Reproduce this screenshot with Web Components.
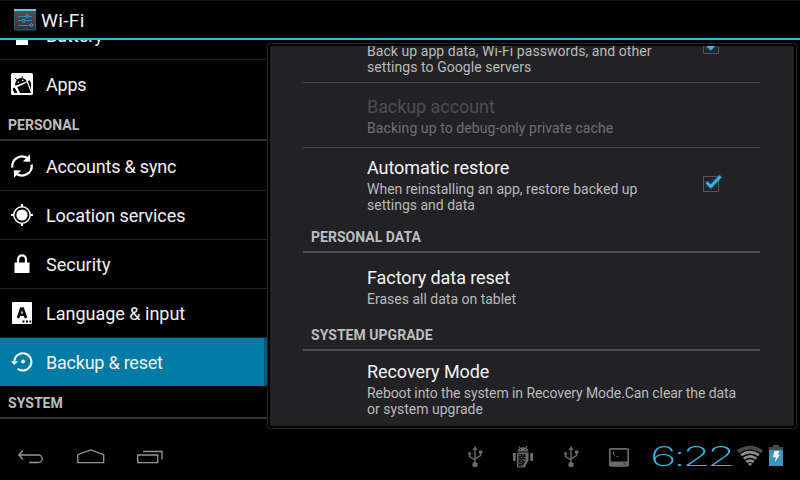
<!DOCTYPE html>
<html lang="en"><head><meta charset="utf-8"><title>Settings</title>
<style>html,body{margin:0;background:#000}</style></head><body><settings-screen></settings-screen>
<script>
const define=(name,html)=>customElements.define(name,class extends HTMLElement{
  constructor(){super();this.attachShadow({mode:'open'}).innerHTML=html}
});
const icons={
settings:['22','<defs><linearGradient id="g" x2="0" y2="1"><stop stop-color="#535355"/><stop offset="1" stop-color="#303235"/></linearGradient></defs><path fill="url(#g)" stroke="#286080" d="M.5.5h21v20.5H.5z"/><path fill="#58c9f5" d="M0 0h22v2H0z"/><path stroke="#2588ba" d="M4 7.5h14M4 11.500h14M4 16.5h14"/><g fill="#263b49" stroke="#45a9da"><circle cx="13.500" cy="7" r="1.400"/><circle cx="9.700" cy="11.700" r="1.400"/><circle cx="17.500" cy="16" r="1.400"/></g>'],
battery:['22','<path fill="#fff" d="M7 0h8v3h2v18H5V3h2z"/>'],
apps:['22','<rect width="22" height="22" rx="1.5" fill="#fff"/><g fill="#000"><path d="M4.2 12.7C3.7 8 7 5 10.5 5c2.500 0 4.500 1.500 5.300 3.500zM6.300 14.300 16 9.600l4 10.400H9zM2 15.200l1.700-.7 2.800 5.500H3.500L2 17zM16.800 8l1.700-.8L20 10v6.500z"/><path stroke="#000" d="m6.800 7.500-3-2.700M11.300 6l-.2-3"/></g><g fill="#fff"><circle cx="7.500" cy="9.200" r=".8"/><circle cx="11.700" cy="7.400" r=".8"/></g>'],
sync:['22','<g fill="none" stroke="#fff" stroke-width="2.300"><path d="M1.300 12.500C.3 4 9.500-1.500 16.800 3.200M20.700 9.500C21.700 18 12.500 23.500 5.200 18.800"/></g><path fill="#fff" d="m19-.7.2 7.500-7.400-.4zM3 22.700l-.2-7.500 7.400.4z"/>'],
location:['22','<circle cx="11" cy="11" r="5.600" fill="#fff"/><circle cx="11" cy="11" r="8.200" fill="none" stroke="#fff" stroke-width="1.500"/><path stroke="#fff" stroke-width="2.200" d="M11 0v3M11 19v3M0 11h3M19 11h3"/>'],
security:['22','<path fill="#fff" d="M3.500 9.500h15V20h-15z"/><path fill="none" stroke="#fff" stroke-width="2.200" d="M7 10V6.800c0-6 8-6 8 0V10"/>'],
language:['22','<rect x="1" width="20" height="22" rx="1" fill="#fff"/><path fill="none" stroke="#000" stroke-width="2.600" d="m7 16 3.200-9.500h1.600L15 16M8 12.700h6"/><path fill="#000" d="M11.500 18.500h2v2h-2zM15 18.500h2v2h-2zM18.500 18.500h1.700v2h-1.700z"/>'],
backup:['22','<path fill="none" stroke="#fff" stroke-width="2" d="M3.200 10.500a8.600 8.600 0 1 1 3.500 7.300"/><path fill="#fff" d="M0 10.300h7L3.400 14z"/><circle cx="12" cy="10.500" r="1.900" fill="#fff"/>'],
back:['26 16','<path fill="none" stroke="#969696" stroke-width="1.300" d="M1 6h19.500a3.500 3.500 0 0 1 0 7.500H11M5 1.500.8 6 5 10.500"/>'],
home:['28 16','<path fill="none" stroke="#969696" stroke-width="1.300" d="M.7 13.700V5.700L13.700 1l13 4.700v8z"/>'],
recent:['26 16','<path fill="none" stroke="#969696" stroke-width="1.300" d="M.7 6h20v7.700H.7zM6 2.500h19v8"/>'],
usb:['14 22','<g fill="none" stroke="#6b6b6b" stroke-width="1.400"><path d="M7 2v17M1.500 7v3.500L7 14M12.500 6v3.500L7 13"/></g><g fill="#6b6b6b"><circle cx="7" cy="18.600" r="2.700"/><path d="m7 0 2.500 4h-5zM11 4.500h3.500v3H11z"/><circle cx="1.600" cy="7.500" r="1.600"/></g>'],
android:['20 22','<g fill="#6b6b6b"><path d="M4.500 5.500C5 2.500 7 1.300 10 1.300s5 1.200 5.500 4.200zM0 7h2.700v8H0zM17.300 7H20v8h-2.700z"/><path d="M4 7.500q0-1 1-1h10.500v8L11.500 21.500H5q-1 0-1-1z"/><path stroke="#6b6b6b" d="M7 2 6 0M13 2l1-2"/></g><path fill="#161616" d="M7 3h1v1H7zM12 3h1v1h-1zM5.500 8h7v7l-3 5.500h-4z"/><path fill="#777" d="M6.500 9h1v1h-1zM9.500 9h1v1h-1zM8 11h1v1H8zM11 11h1v1h-1zM6.500 13h1v1h-1zM9.500 13h1v1h-1zM8 15h1v1H8zM11 14h1v1h-1zM6.500 17h1v1h-1zM8 19h1v1H8z"/>'],
terminal:['20 19','<rect x=".8" y=".8" width="18.400" height="17.200" rx="1.200" fill="#050505" stroke="#6b6b6b" stroke-width="1.700"/><path fill="#6b6b6b" d="M1 13.500h18V18H1z"/><path stroke="#707070" d="M4.500 4v2l1 1.500"/><path stroke="#444" d="M7 8.500h3"/><path stroke="#111" d="M14.500 16h2"/>'],
wifi:['26 20','<g fill="none" stroke="#8d8d8d" stroke-width="2.700"><path stroke="#494949" stroke-width="3.600" d="M1 5.800q12-8.500 24 0"/><path d="M4 9.200q9-6.200 18 0M6.700 12.700q6.300-4.500 12.600 0M9.200 15.900q3.800-2.700 7.600 0"/></g><path fill="#8d8d8d" d="M10.800 17.800q2.200-1.500 4.400 0L13 20z"/>'],
charge:['14 21','<path fill="#484848" d="M0 2h4V0h6v2h4v4H0z"/><path fill="#3c94bc" d="M0 5h14v16H0z"/><path fill="#eef5f8" d="M5.500 6h4.800L8.800 9.500H11L6 17l.8-4.800H3.800z"/>'],
check:['24 24','<defs><filter id="f" x="-50%" y="-50%" width="200%" height="200%"><feGaussianBlur stdDeviation="1.500"/></filter></defs><path fill="none" stroke="#56565a" d="M3.500 6.500h15v15h-15z"/><path filter="url(#f)" opacity=".5" fill="none" stroke="#149cd0" stroke-width="3.500" d="m6.500 12.500 4.300 4L20.500 6.500"/><path fill="none" stroke="#33b5e5" stroke-width="2.700" d="m6.500 12.300 4.300 4.200L20.600 6.300"/>']};
customElements.define('glyph-icon',class extends HTMLElement{
 connectedCallback(){const [s,p]=icons[this.getAttribute('name')];let [w,h]=s.split(' ');h=h||w;
 (this.shadowRoot||this.attachShadow({mode:'open'})).innerHTML=`<style>:host{display:block;flex:none}svg{display:block;overflow:visible}</style><svg width="${w}" height="${h}" viewBox="0 0 ${w} ${h}">${p}</svg>`}
});
define('nav-item',`<style>:host{display:flex;height:48px;border-bottom:1px solid #252525;align-items:center;padding-left:11px;gap:13px;color:#f3f3f3;font-size:18px;letter-spacing:var(--track,0)}
:host([selected]){background:linear-gradient(90deg,#007ba5 264px,#00587a 264px);border-bottom:0}:host([last]){border-bottom:0}span{white-space:nowrap}</style><slot name="icon"></slot><span><slot></slot></span>`);
define('section-title',`<style>:host{display:block;height:31px;border-bottom:2px solid #343434;font:bold 14px/34px Roboto,sans-serif;color:#bdbdbd;padding-left:8px;letter-spacing:.03px}
:host([panel]){border-color:#4b4b50}</style><slot></slot>`);
define('pref-row',`<style>:host{display:flex;box-sizing:border-box;border-bottom:1px solid #49494d;padding:2px 36px 0 64px;justify-content:space-between;align-items:center;color:#f3f3f3}
:host([last]){border:0}:host([disabled]){color:#4d4d4f;--summary:#707072}.t{font-size:18px;line-height:22px;white-space:nowrap;letter-spacing:-.07px}.s{padding-top:2px;font-size:14px;line-height:16px;color:var(--summary,#bababa);white-space:nowrap;letter-spacing:var(--strack,0)}</style><div><div class="t"><slot name="title"></slot></div><div class="s"><slot></slot></div></div><slot name="control"></slot>`);
define('title-bar',`<style>:host{box-sizing:border-box;display:flex;height:40px;border-bottom:2px solid #33b5e5;border-top:1px solid #111;background:#000;align-items:center;padding:1px 14px 0;gap:5px;color:#f3f3f3;font-size:19px;letter-spacing:.35px}span{padding-top:1px}</style><glyph-icon name="settings"></glyph-icon><span><slot></slot></span>`);
define('nav-list',`<style>:host{display:flex;flex-direction:column;justify-content:flex-start;width:267px;height:390px;overflow:hidden}div{margin-top:-29px}</style><div><slot></slot></div>`);
define('detail-pane',`<style>:host{display:block;box-sizing:border-box;width:530px;height:386px;margin-top:3px;border:1px solid #252525;padding:2px;background:#000}
div{height:380px;background:#222226;overflow:hidden}section{width:457px;margin:-30px 0 0 33px}</style><div><section><slot></slot></section></div>`);
define('status-bar',`<style>:host{display:flex;height:50px;background:#000;justify-content:space-between}nav,aside{display:flex;align-items:center}nav{padding:4px 0 0 18px;gap:33px}nav :last-child{margin-left:-1px}aside{padding:4px 17px 0 0}
.a{display:flex;align-items:center;gap:38px}.clock{width:83px;height:30px;margin-left:22px}.clock span{display:block;transform:scaleX(1.69);transform-origin:left;font:200 27px/30px Inter,sans-serif;letter-spacing:-2px;color:#33b5e5;width:max-content;margin-left:-1px}
.w{margin:-2px 0 0 3px}.b{margin:-3px 0 0 6px}</style>
<nav><glyph-icon name="back"></glyph-icon><glyph-icon name="home"></glyph-icon><glyph-icon name="recent"></glyph-icon></nav>
<aside><div class="a"><glyph-icon name="usb" style="margin-right:-7px"></glyph-icon><glyph-icon name="android"></glyph-icon><glyph-icon name="usb" style="margin:0 -7px"></glyph-icon><glyph-icon name="terminal"></glyph-icon></div><div class="clock"><span>6:22</span></div><glyph-icon class="w" name="wifi"></glyph-icon><glyph-icon class="b" name="charge"></glyph-icon></aside>`);
define('settings-screen',`<style>:host{display:block;width:800px;height:480px;overflow:hidden;background:#000;font-family:Roboto,sans-serif}main{display:flex;height:390px}</style>
<title-bar>Wi-Fi</title-bar><main><nav-list>
<nav-item><glyph-icon slot="icon" name="battery"></glyph-icon>Battery</nav-item>
<nav-item last style="--track:-.2px"><glyph-icon slot="icon" name="apps"></glyph-icon>Apps</nav-item>
<section-title style="margin-bottom:1px">PERSONAL</section-title>
<nav-item style="--track:-.2px"><glyph-icon slot="icon" name="sync"></glyph-icon>Accounts &amp; sync</nav-item>
<nav-item style="--track:-.07px"><glyph-icon slot="icon" name="location"></glyph-icon>Location services</nav-item>
<nav-item><glyph-icon slot="icon" name="security"></glyph-icon>Security</nav-item>
<nav-item><glyph-icon slot="icon" name="language"></glyph-icon>Language &amp; input</nav-item>
<nav-item selected style="--track:-.23px"><glyph-icon slot="icon" name="backup"></glyph-icon>Backup &amp; reset</nav-item>
<section-title>SYSTEM</section-title>
</nav-list><detail-pane>
<pref-row style="height:67px;padding-top:0;padding-bottom:4px;--strack:.06px"><span slot="title">Back up my data</span>Back up app data, Wi-Fi passwords, and other<br>settings to Google servers<glyph-icon slot="control" name="check" style="margin-top:-6px"></glyph-icon></pref-row>
<pref-row disabled style="height:65px;--strack:.08px"><span slot="title">Backup account</span>Backing up to debug-only private cache</pref-row>
<pref-row last style="height:72px"><span slot="title">Automatic restore</span>When reinstalling an app, restore backed up<br>settings and data<glyph-icon slot="control" name="check" style="margin-top:-7px"></glyph-icon></pref-row>
<section-title panel>PERSONAL DATA</section-title>
<pref-row last style="height:65px"><span slot="title">Factory data reset</span>Erases all data on tablet</pref-row>
<section-title panel>SYSTEM UPGRADE</section-title>
<pref-row last style="height:75px;padding-top:0;--strack:-.085px"><span slot="title">Recovery Mode</span>Reboot into the system in Recovery Mode.Can clear the data<br><span style="letter-spacing:0">or system upgrade</span></pref-row>
</detail-pane></main><status-bar></status-bar>`);
</script></body></html>
